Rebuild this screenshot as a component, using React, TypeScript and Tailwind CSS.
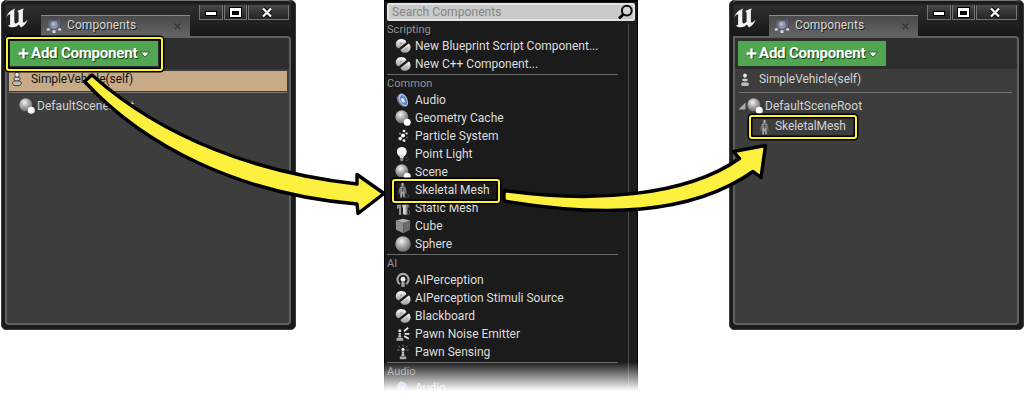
import React from "react";

type IconName =
  | "duo" | "audio" | "scene" | "particle" | "light" | "skeletal" | "static"
  | "cube" | "sphere" | "perception" | "noise" | "sensing" | "pawn";

function Gradients() {
  return (
    <svg className="absolute h-0 w-0">
      <defs>
        <radialGradient id="ball" cx="0.4" cy="0.32" r="0.7">
          <stop offset="0" stopColor="#f2f2f2" />
          <stop offset="0.5" stopColor="#a8a8a8" />
          <stop offset="1" stopColor="#6a6a6a" />
        </radialGradient>
        <linearGradient id="metal" x1="0" y1="0" x2="0" y2="1">
          <stop offset="0" stopColor="#ffffff" />
          <stop offset="1" stopColor="#9a9a9a" />
        </linearGradient>
        <linearGradient id="bone" x1="0" y1="0" x2="1" y2="0">
          <stop offset="0" stopColor="#5c5c5c" />
          <stop offset="0.45" stopColor="#b4b4b4" />
          <stop offset="1" stopColor="#555555" />
        </linearGradient>
      </defs>
    </svg>
  );
}

function Icon({ name }: { name: IconName }) {
  return (
    <svg viewBox="0 0 16 16" className="h-4 w-4 shrink-0">
      {name === "duo" && (
        <g>
          <path d="M3.6 10.6C1.2 9.4 0.1 6.8 1.1 4.2C2.3 1.3 6 0.1 9 1.5C10.3 2.1 11 3 11.4 4.2Z" fill="url(#metal)" />
          <path d="M5 6.2C5.2 4.8 6.4 4 7.8 4.2L5.6 6.4Z" fill="#8c8c8c" />
          <path d="M5.4 11.9L13.8 5.6C16 7.4 16.2 11 13.9 13.3C11.2 15.8 6.8 15.1 5.4 11.9Z" fill="url(#metal)" />
          <path d="M9.4 11.4L12.6 9C12.8 10.8 11.4 12.2 9.4 11.4Z" fill="#a2a2a2" />
        </g>
      )}
      {name === "audio" && (
        <g>
          <path d="M4.2 2.2L1.8 5.2C1.4 8.8 3.6 12.8 8.2 14.6L12.6 14Z" fill="#6c7480" />
          <ellipse cx="8.3" cy="8" rx="4.1" ry="6.9" transform="rotate(-27 8.3 8)" fill="#a9c4ee" />
          <ellipse cx="8.6" cy="8.2" rx="2.9" ry="5.3" transform="rotate(-27 8.6 8.2)" fill="#5d83c2" />
          <ellipse cx="8" cy="8.4" rx="1.5" ry="2.6" transform="rotate(-27 8 8.4)" fill="#dfebff" />
        </g>
      )}
      {name === "scene" && (
        <g>
          <circle cx="6.8" cy="6.8" r="6.5" fill="url(#ball)" />
          <circle cx="12.2" cy="12.2" r="3.5" fill="#fff" />
        </g>
      )}
      {name === "particle" && (
        <g fill="#eee">
          <circle cx="9" cy="3" r="1.3" />
          <circle cx="5" cy="5.6" r="0.9" fill="#aaa" />
          <circle cx="11.6" cy="5.4" r="1.2" fill="#ccc" />
          <circle cx="8" cy="7.4" r="2" fill="#fff" />
          <circle cx="5.2" cy="10.6" r="1.8" />
          <circle cx="9" cy="12.6" r="1.4" />
          <circle cx="12" cy="9.6" r="0.8" fill="#888" />
        </g>
      )}
      {name === "light" && (
        <g>
          <circle cx="6.8" cy="5.8" r="4.9" fill="#f4f4f4" />
          <path d="M3.8 8.9H9.8L8.4 12H5.2Z" fill="#dcdcdc" />
          <path d="M5.2 12H8.4V14.4L6.8 15.5L5.2 14.4Z" fill="#858585" />
          <path d="M10.6 11.5Q14 11.3 13.2 13.6Q12.3 15 10.4 14.3" fill="none" stroke="#484848" />
        </g>
      )}
      {name === "skeletal" && (
        <g fill="url(#bone)">
          <circle cx="7.6" cy="2.5" r="1.8" />
          <path d="M5 4.6H10.2L11.9 9.8L11.7 12H10.7L10.1 8L10.3 15.5H8.3L7.7 10.8L7 15.5H5L5.2 8L4.4 12H3.3L3.4 9.4Z" />
          <path d="M7.6 5.2V10M5.8 6.4H9.4M5.9 8.1H9.3" stroke="#333" strokeWidth="0.6" />
          <path d="M11.6 12.8H13.6V15.2H10.8" fill="none" stroke="#4c4c4c" strokeWidth="0.8" />
        </g>
      )}
      {name === "static" && (
        <g fill="#8c8c8c">
          <path d="M2 5L6.2 2.6V15H4V8L2 9Z" />
          <path d="M7 4.2L12 2.2L14.4 4.6V8L12.6 7V14.8H10V8.5L7 7.2Z" fill="url(#bone)" />
          <path d="M7.4 5L10.4 5.4V14.4H8V8Z" fill="#d5d5d5" />
          <path d="M12.5 10L14.5 11V14.4H12.5Z" fill="none" stroke="#505050" />
        </g>
      )}
      {name === "cube" && (
        <g>
          <path d="M0.8 2.6L8 0.8L15.2 2.6L8.4 5Z" fill="#b0b0b0" />
          <path d="M0.8 2.6L8.4 5V15.3L1 11.8Z" fill="#8c8c8c" />
          <path d="M15.2 2.6L8.4 5V15.3L15 11.8Z" fill="#6c6c6c" />
        </g>
      )}
      {name === "sphere" && <circle cx="8" cy="8" r="7.7" fill="url(#ball)" />}
      {name === "perception" && (
        <g>
          <path d="M5 12.2A5.6 5.6 0 1 1 11 12.2" fill="none" stroke="#a6a6a6" strokeWidth="2.1" />
          <circle cx="8" cy="7.2" r="2.4" fill="#eee" />
          <path d="M6.6 9.3H9.4L9.8 14.7H6.2Z" fill="#a5a5a5" />
        </g>
      )}
      {name === "noise" && (
        <g>
          <circle cx="4.8" cy="4.8" r="1.5" fill="#ddd" />
          <path d="M3.4 7H6.2L5.7 8.5L6.6 11.4H3L3.9 8.5Z" fill="#bdbdbd" />
          <path d="M1.4 12H8.2V14.8H1.4Z" fill="#aaa" />
          <path d="M9 5.2L13.2 1.8M9.6 7.8H14.4M9.2 10L13.8 12.8" stroke="#e5e5e5" strokeWidth="1.8" />
        </g>
      )}
      {name === "sensing" && (
        <g>
          <circle cx="8" cy="5.4" r="1.6" fill="#eee" />
          <path d="M6.5 7.6H9.5L8.9 9.2L9.7 12H6.3L7.1 9.2Z" fill="#bdbdbd" />
          <path d="M4.8 12.5H11.2V15.2H4.8Z" fill="#aaa" />
          <path d="M8 0.8V2.6M3.5 1.8L5 3.4M12.5 1.8L11 3.4M2.4 6H4.6M11.4 6H13.6" stroke="#888" strokeWidth="1" />
        </g>
      )}
      {name === "pawn" && (
        <g stroke="#222" strokeWidth="0.8">
          <ellipse cx="8" cy="12.2" rx="4.4" ry="2.5" fill="#bbb" />
          <ellipse cx="8" cy="7.9" rx="3.2" ry="2" fill="#d0d0d0" />
          <ellipse cx="8" cy="3.6" rx="2.3" ry="2.6" fill="#ececec" />
        </g>
      )}
    </svg>
  );
}

function UnrealLogo() {
  return (
    <svg viewBox="0 0 22 20" className="ml-px mt-2 h-5 w-[22px] shrink-0" fill="#f4f4f4">
      <path d="M0.3 9.2C1.6 5.2 4.2 2.2 9.4 0.4C8.4 1.4 8.3 2.5 8.3 4V13.6C8.3 15 9 15.6 10 15.4C11 15.2 12 14.4 12.6 13.6V5.4C12.6 4 12 3.4 11 3.6C12.8 2 15.2 1 18 0.4C17 1.6 16.9 2.6 16.9 4V13.8C16.9 15.1 18.3 15 21.6 11.8C20.5 15.2 18.2 17.6 15 19.4L12.9 16.6C11.5 18.2 9.6 19.3 7 19.3C4.6 19.3 2.8 18.6 2 17.4C3.4 17.5 4.1 16.8 4.1 15.2V7.2C4.1 5.6 2.4 6.2 0.3 9.2Z" />
    </svg>
  );
}

function Tab() {
  return (
    <div className="ml-[13px] mt-[15px] flex h-[21px] w-[149px] items-center border-t border-[#a58b45] bg-linear-to-b from-[#4a4a4a] to-[#646464] pl-[5px] pr-[9px]">
      <svg viewBox="0 0 16 16" className="h-4 w-4 shrink-0">
        <path d="M3 3L13 3M3 3V11M13 3V11L8 14L3 11" fill="none" stroke="#66718a" strokeWidth="1.2" />
        <circle cx="8" cy="7" r="3.9" fill="#8a94a6" />
        <circle cx="7.4" cy="6" r="1.8" fill="#b4bdca" />
        <path d="M0.8 10.4H3.8V12.6H0.8ZM12.2 10.4H15.2V12.6H12.2ZM6.6 12.2H9.4V15H6.6Z" fill="#dce1e9" />
        <path d="M2.4 2H4.6V4H2.4ZM11.4 2H13.6V4H11.4Z" fill="#4f6690" />
      </svg>
      <span className="-mt-[2px] ml-[5px] text-[12px] tracking-[0.08px] text-[#d6d6d6] [text-shadow:1px_1px_0_#222]">Components</span>
      <svg viewBox="0 0 7 7" className="ml-auto h-[7px] w-[7px]">
        <path d="M0.7 0.7L6.3 6.3M6.3 0.7L0.7 6.3" stroke="#303030" strokeWidth="1.1" />
      </svg>
    </div>
  );
}

const captionButton =
  "flex items-center justify-center border border-t-0 border-[#747474] bg-linear-to-b from-[#4b4b4b] to-[#242424]";

function Caption() {
  return (
    <div className="ml-[9px] mt-[5px] flex h-[15px] gap-px">
      <div className={captionButton + " w-[24px]"}>
        <span className="mt-[3px] h-[5px] w-[12px] border border-black bg-white" />
      </div>
      <div className={captionButton + " w-[23px]"}>
        <svg viewBox="0 0 13 11" className="h-[11px] w-[13px]">
          <path d="M0 0H13V11H0Z" fill="#000" />
          <path d="M1 1H12V10H1ZM3 4V8H10V4Z" fill="#fff" fillRule="evenodd" />
        </svg>
      </div>
      <div className={captionButton + " w-[41px] pr-[3px]"}>
        <svg viewBox="0 0 12 11" className="h-[11px] w-3">
          <path d="M2 1.5L10 9.5M10 1.5L2 9.5" stroke="#000" strokeWidth="4" />
          <path d="M2 1.5L10 9.5M10 1.5L2 9.5" stroke="#fff" strokeWidth="2.4" />
        </svg>
      </div>
    </div>
  );
}

function Highlight({ className }: { className: string }) {
  return <span className={"absolute rounded-[3px] border-2 border-[#fdf03f] shadow-[0_0_0_1.5px_#000,inset_0_0_0_1.5px_#000] " + className} />;
}

function ComponentsWindow({ after = false }: { after?: boolean }) {
  return (
    <section className="flex h-[330px] w-[295px] shrink-0 flex-col rounded-[5px] border border-[#3c3c3c] bg-[#1b1b1b] pl-[3px] pr-[4px] pb-[4px]">
      <header className="-mt-px flex h-9 items-start rounded-t-[4px] border-t border-[#777] bg-linear-to-b from-[#141414] via-[#2d2d2d] via-15% to-[#181818] [&>*]:-translate-y-px">
        <UnrealLogo />
        <Tab />
        <Caption />
      </header>
      <div className="flex flex-1 flex-col overflow-hidden rounded-b-[4px] rounded-tr-[4px] border-2 border-[#606060] bg-[#3d3d3d]">
        <div className="h-[31px] bg-[#2e2e2e] pl-[3px] pt-[3px]">
          <button className="flex h-[25px] w-[148px] items-center bg-[#50a651] pl-[8px] text-white">
            <svg viewBox="0 0 11 11" className="h-[11px] w-[11px] shrink-0">
              <path d="M6.5 2V11M2 6.5H11" stroke="#174a17" strokeWidth="2" />
              <path d="M5.5 0.5V10.5M0.5 5.5H10.5" stroke="#fff" strokeWidth="2.3" />
            </svg>
            <span className="ml-[2px] w-[109px] shrink-0 whitespace-nowrap text-left text-[15px] font-bold tracking-[-0.2px] [text-shadow:1px_1px_1px_#163d16]">Add Component</span>
            <svg viewBox="0 0 10 7" className="mt-[2px] h-[7px] w-[10px] shrink-0">
              <path d="M0.6 1H9.4L5 6.2Z" fill="#fff" stroke="#174a17" strokeWidth="0.8" />
            </svg>
          </button>
        </div>
        {after ? (
          <div className="ml-[4px] flex h-[24px] w-[273px] items-center border-b border-[#757575] text-[#d2d2d2]">
            <span className="-ml-[2px] -mt-px flex w-[22px]"><Icon name="pawn" /></span>
            <span className="-mt-[3px] text-[12px] tracking-[-0.07px]">SimpleVehicle(self)</span>
          </div>
        ) : (
          <div className="ml-[2px] mt-[2px] flex h-[22px] w-[278px] flex-col border-b border-[#767676]">
            <div className="flex h-5 items-center bg-[#c8aa86] pb-1 text-[#111]">
              <span className="flex w-[22px]"><Icon name="pawn" /></span>
              <span className="text-[12px] tracking-[-0.07px]">SimpleVehicle(self)</span>
            </div>
          </div>
        )}
        <div className="mt-[3px] flex h-[20px] items-center pl-[3px] text-[#d2d2d2]">
          <svg viewBox="0 0 8 8" className={"h-2 w-2 " + (after ? "" : "invisible")}>
            <path d="M7.5 0.5V7.5H0.5Z" fill="#aaa" />
          </svg>
          <span className="ml-px flex w-[18px]"><Icon name="scene" /></span>
          <span className="text-[12px] tracking-[0.06px]">DefaultSceneRoot</span>
        </div>
        {after && (
          <div className="flex h-[21px] items-center pl-[22px] text-[#d2d2d2]">
            <span className="flex w-[18px]"><Icon name="skeletal" /></span>
            <span className="-mt-[2px] text-[12px] tracking-[-0.07px]">SkeletalMesh</span>
          </div>
        )}
      </div>
    </section>
  );
}

const groups: { label: string; items: [IconName, string][] }[] = [
  { label: "Scripting", items: [["duo", "New Blueprint Script Component..."], ["duo", "New C++ Component..."]] },
  {
    label: "Common",
    items: [
      ["audio", "Audio"], ["scene", "Geometry Cache"], ["particle", "Particle System"],
      ["light", "Point Light"], ["scene", "Scene"], ["skeletal", "Skeletal Mesh"],
      ["static", "Static Mesh"], ["cube", "Cube"], ["sphere", "Sphere"],
    ],
  },
  {
    label: "AI",
    items: [
      ["perception", "AIPerception"], ["duo", "AIPerception Stimuli Source"], ["duo", "Blackboard"],
      ["noise", "Pawn Noise Emitter"], ["sensing", "Pawn Sensing"],
    ],
  },
  { label: "Audio", items: [["audio", "Audio"]] },
];

function ComponentMenu() {
  return (
    <section className="relative ml-[88px] h-[396px] w-[254px] shrink-0 overflow-hidden bg-[#1b1b1b] px-[3px] pt-[3px] shadow-[inset_1px_0_0_#000,inset_-1px_0_0_#000,inset_0_2px_0_#000]">
      <div className="flex h-[18px] items-center justify-between rounded-[2px] border-2 border-[#e2e2e2] bg-[#cacaca] pl-[3px]">
        <span className="text-[12px] tracking-[0.07px] text-[#858585]">Search Components</span>
        <svg viewBox="0 0 16 16" className="h-4 w-4">
          <circle cx="9.8" cy="6.6" r="4.9" fill="#d4d4d4" stroke="#0b0b0b" strokeWidth="2" />
          <path d="M6.4 10.2L2 14.4" stroke="#0b0b0b" strokeWidth="2.8" />
        </svg>
      </div>
      <div className="flex">
        <div className="w-[231px] pt-px">
          {groups.map((group, index) => (
            <div key={group.label}>
              {index > 0 && <div className="flex h-1 items-center"><div className="h-px w-full bg-[#686868]" /></div>}
              <div className="flex h-[14px] items-center text-[11px] tracking-[0.05px] text-[#939393]">{group.label}</div>
              {group.items.map(([icon, text]) => (
                <div key={text} className={"relative flex h-[18px] items-center pl-2 pt-px " + (icon === "skeletal" ? "z-10" : "")}>
                  {icon === "skeletal" && <Highlight className="-top-px left-[5px] h-6 w-[108px] bg-[#1b1b1b]" />}
                  <span className="relative flex w-5"><Icon name={icon} /></span>
                  <span className="relative whitespace-nowrap pt-px text-[12px] text-[#dedede]">{text}</span>
                </div>
              ))}
            </div>
          ))}
        </div>
        <div className="ml-[10px] mt-[3px] h-[372px] w-px bg-[#4c4c4c]" />
      </div>
      <div className="absolute inset-x-0 bottom-0 z-20 h-[34px] bg-linear-to-b from-transparent to-white to-85%" />
    </section>
  );
}

function Arrows() {
  return (
    <svg viewBox="0 0 1024 404" className="pointer-events-none absolute inset-0 z-30 h-[404px] w-[1024px]" fill="#fdf03f" stroke="#000" strokeWidth="3.4" strokeLinejoin="round">
      <path d="M92 75C165 140 260 173 357 184V174.5L384 193.5L358 213.5L357 204C240 194 145 147 84.5 81.5Z" />
      <path d="M504 190.5C590 203 685 197 739.5 158.5L733.5 151.5L765.5 145.5L761 177.5L753 171.5C690 216 600 217 504 201Z" />
    </svg>
  );
}

export default function App() {
  return (
    <main className="relative flex h-[404px] w-[1024px] items-start overflow-hidden bg-white pl-px font-['Roboto','Liberation_Sans',sans-serif] leading-none">
      <Gradients />
      <ComponentsWindow />
      <ComponentMenu />
      <div className="w-[91px] shrink-0" />
      <ComponentsWindow after />
      <Highlight className="left-[6px] top-[37px] z-10 h-[34px] w-[157px]" />
      <Highlight className="left-[749px] top-[115px] z-10 h-6 w-[108px]" />
      <Arrows />
    </main>
  );
}
